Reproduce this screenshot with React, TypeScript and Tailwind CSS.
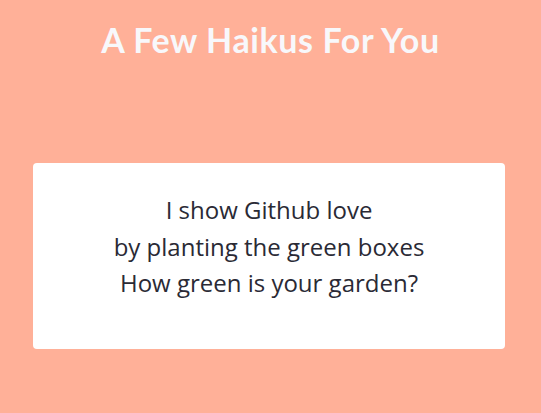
import React from 'react';

const lines = ['I show Github love', 'by planting the green boxes', 'How green is your garden?'];

export default function App() {
  return (
    <div className="min-h-[413px] w-full bg-[#ffb098] flex flex-col">
      <h1 className="text-center text-[34px] font-bold text-[#f8f8fb] pt-[19px] leading-[42px] tracking-[0.6px]" style={{ fontFamily: 'Lato, sans-serif' }}>
        A Few Haikus For You
      </h1>
      <div className="mt-[102px] ml-[33px] w-[472px] h-[186px] bg-white rounded-[4px] flex flex-col items-center justify-center pb-[18px]">
        {lines.map((line) => (
          <p key={line} className="text-[24px] leading-[36.5px] text-[#2a2a35]" style={{ fontFamily: '"Open Sans", sans-serif' }}>
            {line}
          </p>
        ))}
      </div>
    </div>
  );
}
